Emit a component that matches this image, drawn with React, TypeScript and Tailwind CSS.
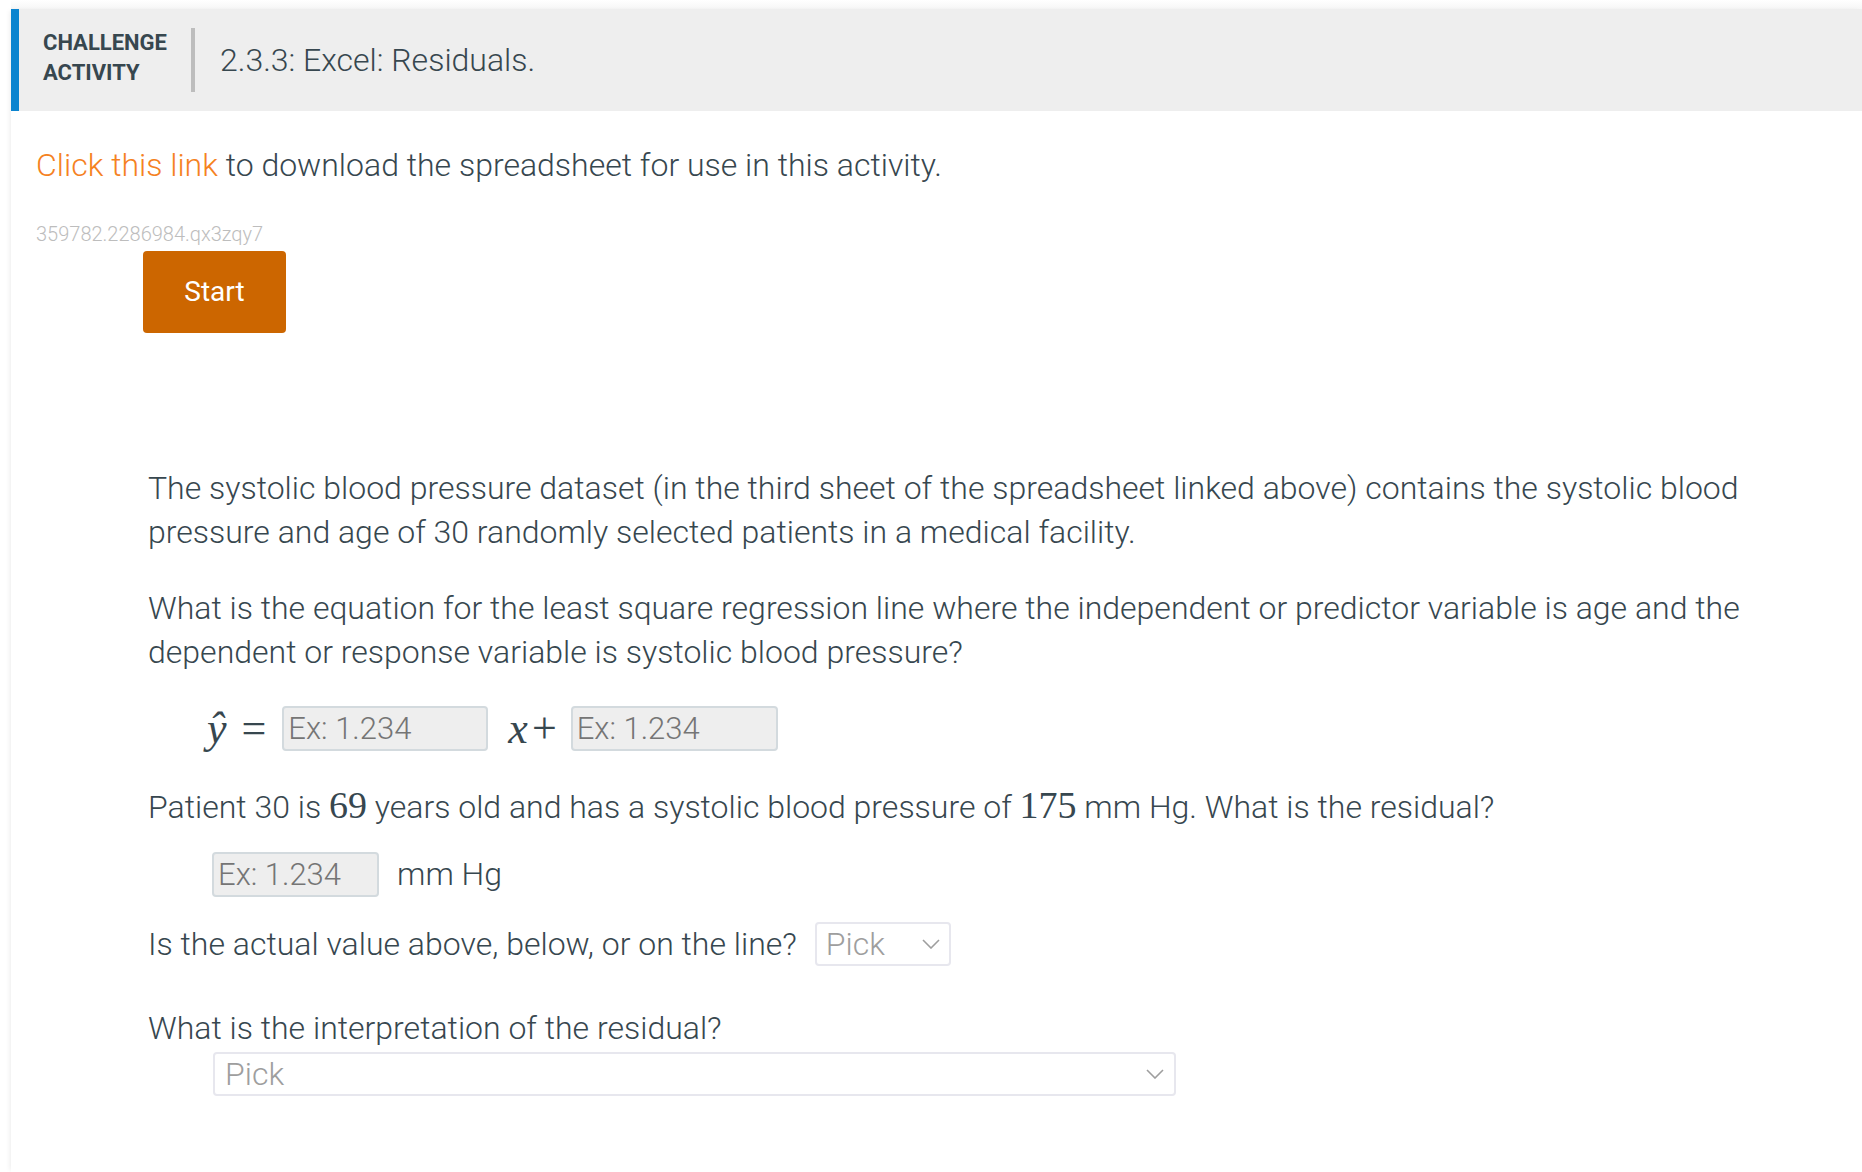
import React from 'react';

const Chevron: React.FC = () => (
    <svg width="18" height="10" viewBox="0 0 18 10" fill="none">
        <path d="M1 1 L9 9 L17 1" stroke="#9e9e9e" strokeWidth="1.6" />
    </svg>
);

const NumInput: React.FC<{ width: string }> = ({ width }) => (
    <input
        type="text"
        placeholder="Ex: 1.234"
        className={`${width} h-[45px] bg-[#eeeeee] border-2 border-[#d3dade] rounded-[4px] pl-[4px] text-[31px] font-light text-[#37474f] placeholder:text-[#757575] outline-none`}
    />
);

const PickSelect: React.FC<{ className: string }> = ({ className }) => (
    <div className={`h-[44px] bg-white border-2 border-[#e7e7ee] rounded-[4px] flex items-center justify-between ${className}`}>
        <span className="text-[32px] font-light text-[#9e9e9e] leading-none">Pick</span>
        <Chevron />
    </div>
);

export default function App() {
    return (
        <div className="min-h-screen bg-white font-['Roboto',sans-serif] text-[#37474f]">
            <div className="ml-[11px] min-h-screen">
                <div className="h-[9px] bg-gradient-to-b from-white to-[#f6f6f6]" />
                <div className="min-h-[1163px] shadow-[-3px_0_5px_-2px_rgba(0,0,0,0.08)]">
                    {/* Header */}
                    <div className="flex items-center h-[102px] bg-[#eeeeee] border-l-8 border-[#0b84cf] pl-6">
                        <div className="text-[22px] leading-[30px] font-bold uppercase text-[#37474f] -mt-[5px]">
                            Challenge<br />Activity
                        </div>
                        <div className="ml-6 w-1 h-16 bg-[#bdbdbd]" />
                        <h1 className="ml-[25px] text-[32px] font-light text-[#37474f]">2.3.3: Excel: Residuals.</h1>
                    </div>

                    {/* Body */}
                    <div className="pl-[25px]">
                        <p className="mt-[30px] text-[32px] leading-[48px] font-light">
                            <a className="text-[#f5821f]">Click this link</a> to download the spreadsheet for use in this activity.
                        </p>
                        <div className="mt-[33px] text-[20px] leading-[24px] font-light text-[#bdbdbd]">359782.2286984.qx3zqy7</div>
                        <button className="mt-[5px] ml-[107px] w-[143px] h-[82px] bg-[#cc6600] rounded-[4px] text-white text-[28px] flex items-center justify-center">
                            Start
                        </button>

                        <div className="mt-[133px] ml-[112px] mr-[72px] text-[32px] leading-[44px] font-light">
                            <p>
                                The systolic blood pressure dataset (in the third sheet of the spreadsheet linked above) contains the systolic blood pressure and age of 30 randomly selected patients in a medical facility.
                            </p>
                            <p className="mt-8">
                                What is the equation for the least square regression line where the independent or predictor variable is age and the dependent or response variable is systolic blood pressure?
                            </p>

                            <div className="mt-8 ml-[59px] flex items-center h-[45px]">
                                <span className="font-['Liberation_Serif',serif] italic text-[44px] leading-none">ŷ</span>
                                <span className="ml-[15px] font-['Liberation_Serif',serif] text-[44px] leading-none">=</span>
                                <span className="ml-[16px]"><NumInput width="w-[206px]" /></span>
                                <span className="ml-[20px] font-['Liberation_Serif',serif] italic text-[44px] leading-none">x</span>
                                <span className="ml-[4px] font-['Liberation_Serif',serif] text-[44px] leading-none">+</span>
                                <span className="ml-[14px]"><NumInput width="w-[207px]" /></span>
                            </div>

                            <p className="mt-[34px]">
                                Patient 30 is <span className="font-['Liberation_Serif',serif] text-[38px] leading-none">69</span> years old and has a systolic blood pressure of <span className="font-['Liberation_Serif',serif] text-[38px] leading-none">175</span> mm Hg. What is the residual?
                            </p>

                            <div className="mt-[23px] ml-[64px] flex items-center h-[44px]">
                                <NumInput width="w-[167px]" />
                                <span className="ml-[18px]">mm Hg</span>
                            </div>

                            <div className="mt-[26px] flex items-center h-[44px]">
                                <span>Is the actual value above, below, or on the line?</span>
                                <PickSelect className="ml-[18px] w-[136px] pl-[9px] pr-[9px]" />
                            </div>

                            <p className="mt-[40px]">What is the interpretation of the residual?</p>
                            <PickSelect className="mt-[2px] ml-[65px] w-[963px] pl-[10px] pr-[10px]" />
                        </div>
                    </div>
                </div>
            </div>
        </div>
    );
}
